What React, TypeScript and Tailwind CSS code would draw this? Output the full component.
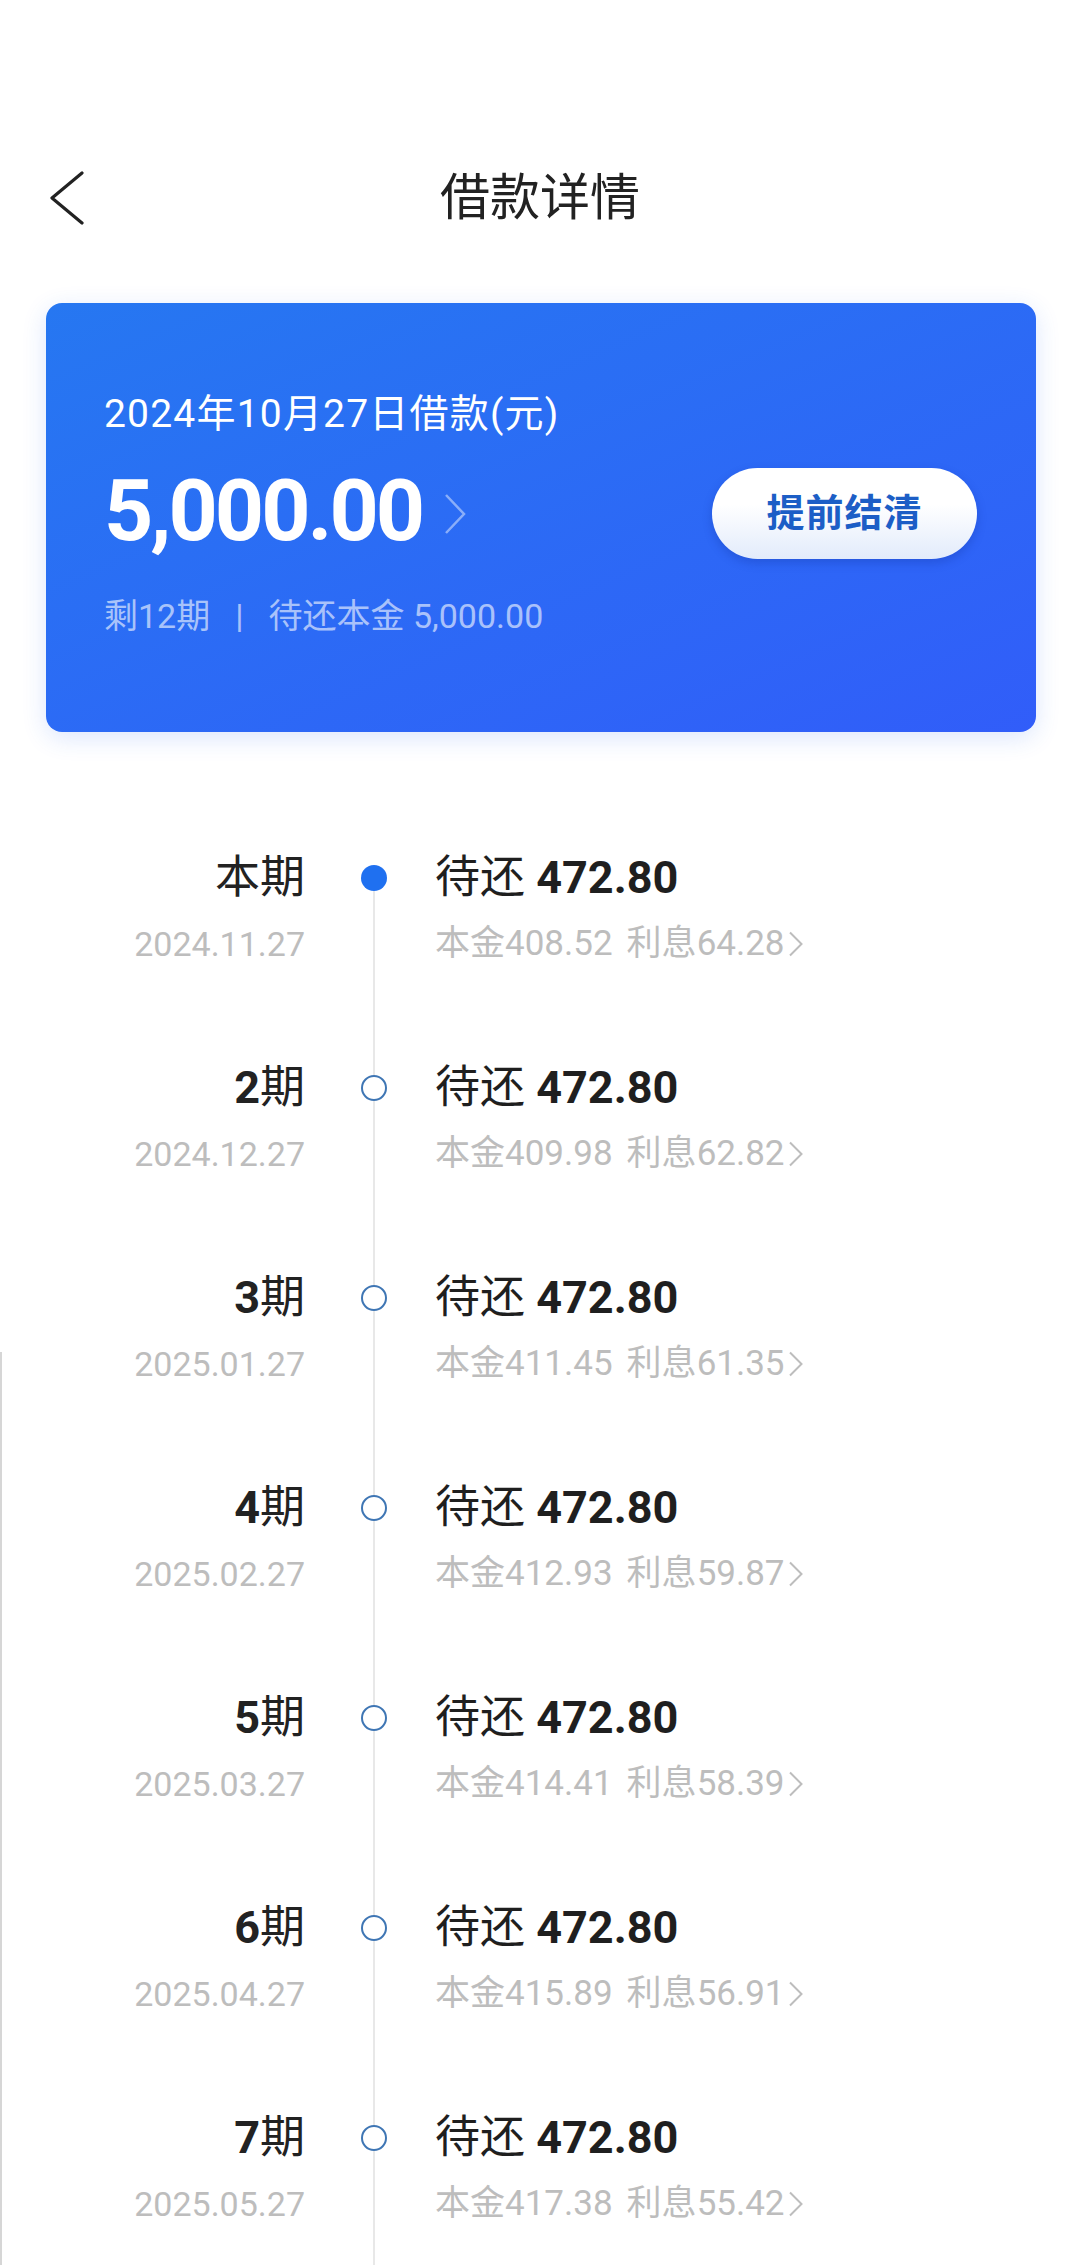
import React from "react";

type Row = {
  label: React.ReactNode;
  date: string;
  principal: string;
  interest: string;
  current?: boolean;
};

const rows: Row[] = [
  { label: <span className="font-normal">本期</span>, date: "2024.11.27", principal: "408.52", interest: "64.28", current: true },
  { label: <><span className="font-bold">2</span>期</>, date: "2024.12.27", principal: "409.98", interest: "62.82" },
  { label: <><span className="font-bold">3</span>期</>, date: "2025.01.27", principal: "411.45", interest: "61.35" },
  { label: <><span className="font-bold">4</span>期</>, date: "2025.02.27", principal: "412.93", interest: "59.87" },
  { label: <><span className="font-bold">5</span>期</>, date: "2025.03.27", principal: "414.41", interest: "58.39" },
  { label: <><span className="font-bold">6</span>期</>, date: "2025.04.27", principal: "415.89", interest: "56.91" },
  { label: <><span className="font-bold">7</span>期</>, date: "2025.05.27", principal: "417.38", interest: "55.42" },
];

function SmallChevron() {
  return (
    <svg width="16" height="26" viewBox="0 0 16 26" className="ml-[3px] shrink-0">
      <polyline points="2,1.5 13.5,13 2,24.5" fill="none" stroke="#bdbdbd" strokeWidth="2" strokeLinejoin="miter" />
    </svg>
  );
}

export default function App() {
  return (
    <div className="relative w-[1080px] h-[2265px] overflow-hidden bg-white font-[Roboto,'Noto_Sans_CJK_SC',sans-serif] text-[#222]">
      {/* left edge artifact */}
      <div className="absolute left-0 top-[1352px] bottom-0 w-[2px] bg-[#d6d6d6]" />

      {/* Header */}
      <div className="pt-[120px]">
        <div className="grid grid-cols-[1fr_auto_1fr] items-center h-[156px]">
          <div className="pl-[50px] flex items-center">
            <svg width="36" height="56" viewBox="0 0 36 56">
              <polyline points="32,3 2,28 32,53" fill="none" stroke="#222" strokeWidth="3.2" strokeLinecap="round" strokeLinejoin="round" />
            </svg>
          </div>
          <div className="text-[50px] leading-[60px] text-[#222]">借款详情</div>
          <div />
        </div>
      </div>

      {/* Card */}
      <div className="ml-[46px] mt-[27px] w-[990px] h-[429px] rounded-[16px] bg-linear-to-br from-[#2677f1] to-[#315df9] shadow-[0_6px_24px_rgba(40,100,240,0.16)] pl-[58px] pr-[59px] pt-[86px]">
        <div className="text-[39px] leading-[50px] text-white tracking-[1.2px]">2024年10月27日借款(元)</div>
        <div className="flex items-center justify-between mt-[28px] h-[88px]">
          <div className="flex items-center">
            <span className="text-[86px] leading-[88px] font-bold text-white tracking-[-3px]">5,000.00</span>
            <svg width="22" height="42" viewBox="0 0 22 42" className="ml-[22px] mt-[6px]">
              <polyline points="2,2 20,21 2,40" fill="none" stroke="rgba(255,255,255,0.45)" strokeWidth="2.5" />
            </svg>
          </div>
          <div className="w-[265px] h-[91px] rounded-full bg-linear-to-b from-white from-40% to-[#e2ebfb] shadow-[0_4px_10px_rgba(10,40,140,0.25)] flex items-center justify-center mt-[4px]">
            <span className="text-[38px] font-bold text-[#1c5ec6] tracking-[1px]">提前结清</span>
          </div>
        </div>
        <div className="mt-[41px] text-[34px] leading-[40px] text-white/60 flex items-center">
          <span>剩12期</span>
          <span className="mx-[25px]">|</span>
          <span>待还本金 5,000.00</span>
        </div>
      </div>

      {/* Timeline */}
      <div className="mt-[118px]">
        {rows.map((r, i) => (
          <div key={i} className="flex h-[210px]">
            <div className="w-[324px] pr-[19px] flex flex-col items-end">
              <div className="text-[45px] leading-[56px] text-[#222]">{r.label}</div>
              <div className="mt-[16px] text-[34px] leading-[44px] text-[#bdbdbd]">{r.date}</div>
            </div>
            <div className="w-[100px] flex flex-col items-center">
              <div className={`w-[2px] h-[15px] ${i === 0 ? "bg-transparent" : "bg-[#e8e8e8]"}`} />
              {r.current ? (
                <div className="w-[26px] h-[26px] rounded-full bg-[#1f70f0]" />
              ) : (
                <div className="w-[26px] h-[26px] rounded-full border-[2.5px] border-[#3f76b4] bg-white" />
              )}
              <div className="w-[2px] flex-1 bg-[#e8e8e8]" />
            </div>
            <div className="pl-[11px] flex flex-col items-start">
              <div className="text-[45px] leading-[56px] text-[#1f1f1f]">
                待还 <span className="font-bold">472.80</span>
              </div>
              <div className="mt-[16px] text-[35px] leading-[44px] text-[#bdbdbd] flex items-center">
                <span>本金{r.principal}</span>
                <span className="ml-[14px]">利息{r.interest}</span>
                <SmallChevron />
              </div>
            </div>
          </div>
        ))}
      </div>
    </div>
  );
}
